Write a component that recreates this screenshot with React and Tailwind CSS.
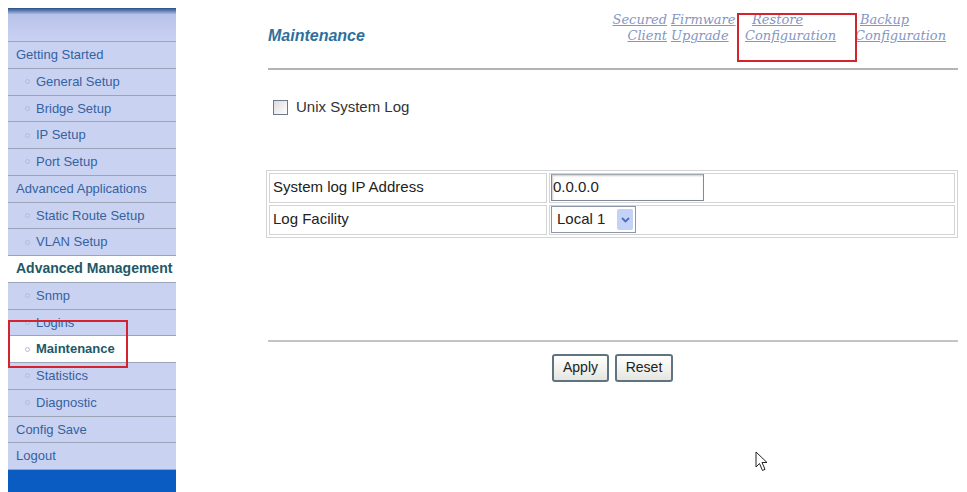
import React from 'react';

const menu = [
  { label: 'Getting Started', type: 'head' },
  { label: 'General Setup', type: 'sub' },
  { label: 'Bridge Setup', type: 'sub' },
  { label: 'IP Setup', type: 'sub' },
  { label: 'Port Setup', type: 'sub' },
  { label: 'Advanced Applications', type: 'head' },
  { label: 'Static Route Setup', type: 'sub' },
  { label: 'VLAN Setup', type: 'sub' },
  { label: 'Advanced Management', type: 'active-head' },
  { label: 'Snmp', type: 'sub' },
  { label: 'Logins', type: 'sub' },
  { label: 'Maintenance', type: 'active-sub' },
  { label: 'Statistics', type: 'sub' },
  { label: 'Diagnostic', type: 'sub' },
  { label: 'Config Save', type: 'head' },
  { label: 'Logout', type: 'head' },
];

const Bullet = () => (
  <span className="mr-[6px] inline-block h-[5px] w-[5px] rounded-full border border-[#b3bcd2]" />
);

const MenuRow = ({ item }) => {
  const active = item.type.startsWith('active');
  const sub = item.type.endsWith('sub');
  return (
    <div
      className={`flex h-[26.75px] items-center border-b border-[#9ba3b6] ${
        active ? 'bg-white font-bold text-[#1e5866]' : 'bg-[#cad2f2] text-[#3462a0]'
      } ${item.type === 'active-head' ? 'text-[14px]' : 'text-[13px]'} ${sub ? 'pl-[17px]' : 'pl-[8px]'}`}
    >
      {sub && <Bullet />}
      {item.label}
    </div>
  );
};

const Sidebar = () => (
  <div className="relative ml-[8px] mt-[8px] w-[168px] shrink-0">
    <div className="h-[34px] border-b border-[#9ba3b6] bg-gradient-to-b from-[#27508a] via-[#b9c3ea] via-[20%] to-[#cad2f2]" />
    {menu.map((item) => (
      <MenuRow key={item.label} item={item} />
    ))}
    <div className="h-[30px] bg-[#0a5cc2]" />
    <div className="pointer-events-none absolute left-0 top-[312px] h-[48px] w-[120px] border-2 border-[#d2232e]" />
  </div>
);

const TabLink = ({ top, bottom, topPad = 0, bottomPad = 0, width, right }) => (
  <a
    className={`flex flex-col leading-[16px] text-[#8596c4] underline italic ${right ? 'items-end' : ''}`}
    style={{ width }}
  >
    <span style={{ paddingLeft: topPad }}>{top}</span>
    <span style={{ paddingLeft: bottomPad }}>{bottom}</span>
  </a>
);

const Cursor = () => (
  <svg className="absolute left-[755px] top-[451px]" width="14" height="22" viewBox="0 0 14 22">
    <path d="M1 1 L1 16 L4.5 12.5 L7.5 19.5 L10 18.3 L7 11.5 L12 11.5 Z" fill="white" stroke="#222" strokeWidth="1" strokeLinejoin="round" />
  </svg>
);

export default function App() {
  return (
    <div
      className="relative flex h-[492px] w-[967px] overflow-hidden bg-white text-[#222]"
      style={{ fontFamily: '"Liberation Sans", Arial, sans-serif' }}
    >
      <Sidebar />
      <div className="ml-[92px] w-[690px] shrink-0">
        <div className="relative flex h-[70px] items-start border-b-2 border-[#b4b4b4]">
          <div className="mt-[24px] text-[16px] font-bold italic text-[#2f6f9c]">Maintenance</div>
          <div
            className="ml-auto mt-[12px] flex gap-[4px] text-[13px]"
            style={{ fontFamily: '"DejaVu Serif", Georgia, serif' }}
          >
            <TabLink top="Secured" bottom="Client" width={48} right />
            <TabLink top="Firmware" bottom="Upgrade" width={70} />
            <TabLink top="Restore" bottom="Configuration" width={106} topPad={7} />
            <TabLink top="Backup" bottom="Configuration" width={103} topPad={5} />
          </div>
          <div className="pointer-events-none absolute left-[469px] top-[13px] h-[49px] w-[120px] border-2 border-[#d2232e]" />
        </div>

        <label className="mt-[26px] ml-[5px] flex items-center text-[15px] text-[#333]">
          <span className="mr-[8px] inline-block h-[15px] w-[15px] border border-[#6c7a8c] bg-gradient-to-br from-[#dcdcdc] to-white" />
          Unix System Log
        </label>

        <table className="mt-[51px] ml-[-2px] w-[692px] border-separate border-spacing-[2px] border border-[#d4d4d4] text-[15px]">
          <tbody>
            <tr>
              <td className="h-[30px] w-[278px] border border-[#d4d4d4] pl-[3px]">System log IP Address</td>
              <td className="border border-[#d4d4d4] pl-[1px]">
                <div className="flex h-[27px] w-[153px] items-center border border-[#7f8b99] border-t-[#a0a8b2] pl-[1px] shadow-[inset_1px_1px_2px_#cfcfcf]">
                  0.0.0.0
                </div>
              </td>
            </tr>
            <tr>
              <td className="h-[30px] border border-[#d4d4d4] pl-[3px]">Log Facility</td>
              <td className="border border-[#d4d4d4] pl-[1px]">
                <div className="flex h-[27px] w-[85px] items-center justify-between border border-[#8c96a4] pl-[5px] pr-[2px]">
                  <span>Local 1</span>
                  <span className="flex h-[21px] w-[16px] items-center justify-center rounded-[2px] bg-[#c4d2f8]">
                    <svg width="9" height="6" viewBox="0 0 9 6">
                      <path d="M1 1 L4.5 4.5 L8 1" fill="none" stroke="#4d6fb8" strokeWidth="1.8" />
                    </svg>
                  </span>
                </div>
              </td>
            </tr>
          </tbody>
        </table>

        <div className="mt-[102px] border-t-2 border-[#c4c4c4]" />
        <div className="mt-[12px] flex gap-[6px] pl-[284px] text-[14px]">
          <button className="h-[28px] w-[57px] rounded-[3px] border-2 border-[#5f7482] bg-gradient-to-b from-white to-[#e6e6e0]">Apply</button>
          <button className="h-[28px] w-[58px] rounded-[3px] border-2 border-[#5f7482] bg-gradient-to-b from-white to-[#e6e6e0]">Reset</button>
        </div>
      </div>
      <Cursor />
    </div>
  );
}
